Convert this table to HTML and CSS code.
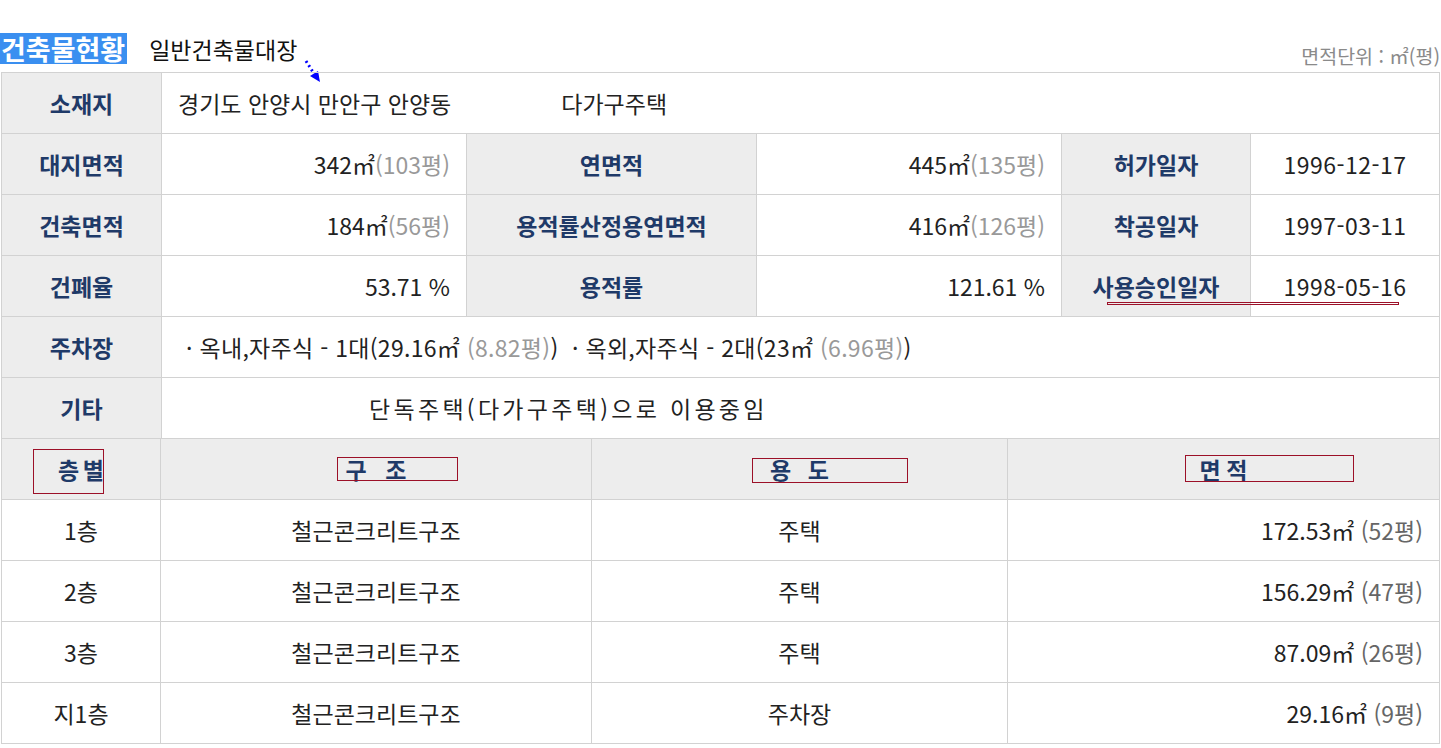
FILE: index.html
```html
<!DOCTYPE html>
<html lang="ko">
<head>
    <meta charset="utf-8">
    <title>건축물현황</title>
    <link rel="stylesheet" href="styles.css">
</head>
<body>
    <div class="page">
        <div class="head">
            <span class="title">건축물현황</span>
            <span class="subtitle">일반건축물대장</span>
            <span class="unit">면적단위 : ㎡(평)</span>
            <svg class="arrow" width="24" height="30" viewBox="0 0 24 30">
                <line x1="3" y1="3" x2="10" y2="14" stroke="#0000ff" stroke-width="3" stroke-dasharray="2 3"/>
                <polygon points="7,18 15,13 17,24" fill="#0000ff"/>
            </svg>
        </div>

        <div class="sheet-wrap">
            <table class="sheet">
                <colgroup>
                    <col class="c-label">
                    <col class="c-val">
                    <col class="c-label2">
                    <col class="c-val">
                    <col class="c-label3">
                    <col class="c-val3">
                </colgroup>
                <tr>
                    <th>소재지</th>
                    <td colspan="5" class="left"><span class="addr">경기도 안양시 만안구 안양동</span><span>다가구주택</span></td>
                </tr>
                <tr>
                    <th>대지면적</th>
                    <td class="num">342㎡<span class="py">(103평)</span></td>
                    <th>연면적</th>
                    <td class="num">445㎡<span class="py">(135평)</span></td>
                    <th>허가일자</th>
                    <td class="date">1996-12-17</td>
                </tr>
                <tr>
                    <th>건축면적</th>
                    <td class="num">184㎡<span class="py">(56평)</span></td>
                    <th>용적률산정용연면적</th>
                    <td class="num">416㎡<span class="py">(126평)</span></td>
                    <th>착공일자</th>
                    <td class="date">1997-03-11</td>
                </tr>
                <tr>
                    <th>건폐율</th>
                    <td class="num">53.71 %</td>
                    <th>용적률</th>
                    <td class="num">121.61 %</td>
                    <th>사용승인일자</th>
                    <td class="date">1998-05-16</td>
                </tr>
                <tr>
                    <th>주차장</th>
                    <td colspan="5" class="left parking">· 옥내,자주식 - 1대(29.16㎡ <span class="py">(8.82평)</span>) &nbsp;· 옥외,자주식 - 2대(23㎡ <span class="py">(6.96평)</span>)</td>
                </tr>
                <tr>
                    <th>기타</th>
                    <td colspan="5" class="left etc">단독주택(다가구주택)으로 이용중임</td>
                </tr>
            </table>

            <table class="floors">
                <colgroup>
                    <col class="f1">
                    <col class="f2">
                    <col class="f3">
                    <col class="f4">
                </colgroup>
                <thead>
                    <tr>
                        <th><span class="mark mark-a">층 별</span></th>
                        <th><span class="mark mark-b">구 조</span></th>
                        <th><span class="mark mark-c">용 도</span></th>
                        <th><span class="mark mark-d">면 적</span></th>
                    </tr>
                </thead>
                <tbody>
                    <tr><td>1층</td><td>철근콘크리트구조</td><td>주택</td><td class="num">172.53㎡ <span class="py2">(52평)</span></td></tr>
                    <tr><td>2층</td><td>철근콘크리트구조</td><td>주택</td><td class="num">156.29㎡ <span class="py2">(47평)</span></td></tr>
                    <tr><td>3층</td><td>철근콘크리트구조</td><td>주택</td><td class="num">87.09㎡ <span class="py2">(26평)</span></td></tr>
                    <tr><td>지1층</td><td>철근콘크리트구조</td><td>주차장</td><td class="num">29.16㎡ <span class="py2">(9평)</span></td></tr>
                </tbody>
            </table>

            <div class="underline"></div>
        </div>
    </div>
</body>
</html>
```

FILE: styles.css
```css
body {
    margin: 0;
    background: #fff;
    font-family: "Noto Sans CJK KR", "Noto Sans", sans-serif;
    color: #222;
}

.page {
    padding: 0 1px;
}

.head {
    position: relative;
    display: flex;
    align-items: flex-end;
    height: 72px;
    padding-bottom: 8px;
    box-sizing: border-box;
}

.title {
    margin-left: -1px;
    padding: 0 2px 0 1px;
    background: #3a8ff0;
    color: #fff;
    font-size: 27px;
    font-weight: bold;
    line-height: 31px;
    letter-spacing: 0;
}

.subtitle {
    margin-left: 22px;
    margin-bottom: 1px;
    font-size: 23px;
    line-height: 28px;
    color: #111;
}

.unit {
    margin-left: auto;
    margin-bottom: -4px;
    font-size: 19.5px;
    line-height: 24px;
    color: #8a8a8a;
}

.arrow {
    position: absolute;
    left: 302px;
    top: 58px;
}

.sheet-wrap {
    position: relative;
}

table {
    width: 1439px;
    border-collapse: collapse;
    table-layout: fixed;
}

th, td {
    height: 60px;
    padding: 0;
    border: 1px solid #d2d2d2;
    font-size: 23px;
    font-weight: normal;
    text-align: center;
    vertical-align: middle;
}

.sheet th,
.floors thead th {
    background: #ededed;
    color: #1f3a68;
    font-weight: bold;
    font-size: 23px;
}

.c-label { width: 160px; }
.c-val { width: 305px; }
.c-label2 { width: 290px; }
.c-label3 { width: 189px; }
.c-val3 { width: 189px; }

.left {
    text-align: left;
    padding-left: 16px;
}

.addr {
    margin-right: 110px;
}

.num {
    text-align: right;
    padding-right: 16px;
}

.py {
    color: #999;
}

.date {
    letter-spacing: 0.5px;
}

.parking {
    padding-left: 24px;
    letter-spacing: 0.3px;
}

.etc {
    padding-left: 207px;
    letter-spacing: 3.3px;
}

.floors {
    margin-top: -1px;
}

.py2 {
    color: #666;
}

.f1 { width: 159px; }
.f2 { width: 431px; }
.f3 { width: 416px; }
.f4 { width: 432px; }

.mark {
    position: relative;
    display: inline-block;
    line-height: 24px;
}

.mark::after {
    content: "";
    position: absolute;
    border: 1px solid #9c1028;
}

.mark-a {
    word-spacing: -3px;
}
.mark-a::after { left: -25px; right: 0; top: -8px; bottom: -13px; }

.mark-b {
    word-spacing: 12px;
}
.mark-b::after { left: -9px; right: -52px; top: 0; bottom: 0; }

.mark-c {
    word-spacing: 10px;
}
.mark-c::after { left: -18px; right: -79px; top: 1px; bottom: -2px; }

.mark-d {
    word-spacing: -1px;
}
.mark-d::after { left: -15px; right: -107px; top: -2px; bottom: -1px; }

.underline {
    position: absolute;
    left: 1106px;
    top: 230px;
    width: 290px;
    height: 1px;
    border: 1px solid #9c1028;
}
```
